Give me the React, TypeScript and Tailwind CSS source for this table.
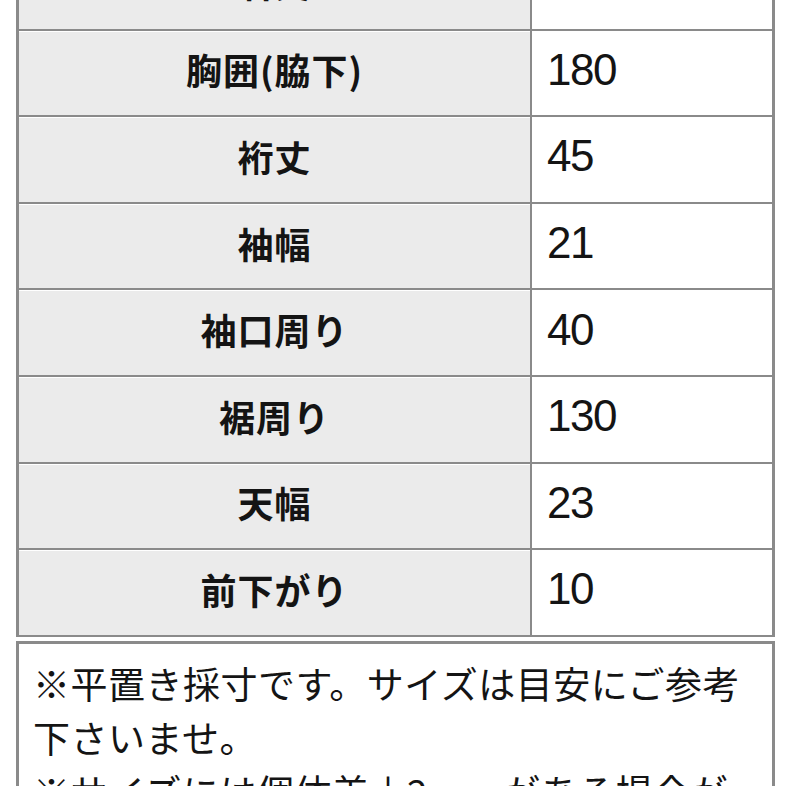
import React from 'react';

const rows = [
    { label: '着丈', value: '70' },
    { label: '胸囲(脇下)', value: '180' },
    { label: '裄丈', value: '45' },
    { label: '袖幅', value: '21' },
    { label: '袖口周り', value: '40' },
    { label: '裾周り', value: '130' },
    { label: '天幅', value: '23' },
    { label: '前下がり', value: '10' },
];

export default function App() {
    return (
        <div className="w-[786px] h-[786px] overflow-hidden bg-white pl-[16px] text-[#141414] font-['Noto_Sans_CJK_JP','Noto_Sans',sans-serif]">
            {/* Size table */}
            <div className="w-[759px] -mt-[58px] border-x-[3px] border-b-[2px] border-[#8a8a8a]">
                {rows.map((row, i) => (
                    <div
                        key={row.label}
                        className={`grid grid-cols-[511px_2px_1fr] h-[86.6px] ${i > 0 ? 'border-t-[2px] border-[#8a8a8a]' : ''}`}
                    >
                        <div className="bg-[#ebebeb] flex items-center justify-center pb-[8px] text-[36px] font-bold tracking-[1px] border-t border-white">
                            {row.label}
                        </div>
                        <div className="bg-[#8a8a8a]" />
                        <div className="flex items-center pl-[15px] pb-[6px] text-[44px] tracking-[-1.5px] font-normal font-['Liberation_Sans',sans-serif]">
                            {row.value}
                        </div>
                    </div>
                ))}
            </div>

            {/* Notes */}
            <div className="w-[759px] mt-[4px] border-x-[3px] border-t-[3px] border-[#8a8a8a] px-[14px] pt-[12px] text-[37px] leading-[54px] tracking-[0.5px]">
                <p>※平置き採寸です。サイズは目安にご参考下さいませ。</p>
                <p>※サイズには個体差±2ｃｍがある場合が御座います。</p>
            </div>
        </div>
    );
}
